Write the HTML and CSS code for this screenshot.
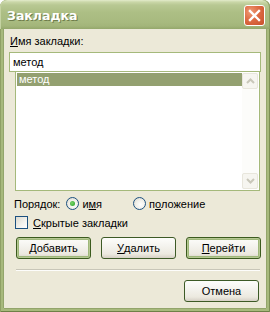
FILE: index.html
```html
<!DOCTYPE html>
<html>
<head>
<meta charset="utf-8">
<link rel="stylesheet" href="styles.css">
</head>
<body>
<div class="window">
  <div class="titlebar">
    <span class="title">Закладка</span>
    <div class="close">
      <svg width="13" height="13" viewBox="0 0 13 13"><path d="M2 2 L11 11 M11 2 L2 11" stroke="#fff" stroke-width="2.4" stroke-linecap="square"/></svg>
    </div>
  </div>
  <div class="client">
    <div class="lbl"><u>И</u>мя закладки:</div>
    <div class="input">метод</div>
    <div class="list">
      <div class="items"><div class="item sel">метод</div></div>
      <div class="scroll">
        <div class="sbtn"><svg width="9" height="6" viewBox="0 0 9 6"><path d="M1 5 L4.5 1.5 L8 5" fill="none" stroke="#c9c7ba" stroke-width="2"/></svg></div>
        <div class="strack"></div>
        <div class="sbtn"><svg width="9" height="6" viewBox="0 0 9 6"><path d="M1 1 L4.5 4.5 L8 1" fill="none" stroke="#c9c7ba" stroke-width="2"/></svg></div>
      </div>
    </div>
    <div class="order">
      <span class="olbl">Порядок:</span>
      <span class="radio on"></span><span class="rtxt">и<u>м</u>я</span>
      <span class="radio r2"></span><span class="rtxt">п<u>о</u>ложение</span>
    </div>
    <div class="check"><span class="box"></span><span><u>С</u>крытые закладки</span></div>
    <div class="buttons">
      <div class="btn def"><u>Д</u>обавить</div>
      <div class="btn"><u>У</u>далить</div>
      <div class="btn def"><u>П</u>ерейти</div>
    </div>
    <div class="sep"></div>
    <div class="footer"><div class="btn">Отмена</div></div>
  </div>
</div>
</body>
</html>
```
FILE: styles.css
```css
html, body { margin: 0; padding: 0; }
body { width: 270px; height: 312px; overflow: hidden; background: #fff; font-family: "Liberation Sans", Arial, sans-serif; font-size: 11px; color: #000; }
u { text-decoration: underline; text-underline-offset: 1px; }
.window { width: 270px; height: 312px; display: flex; flex-direction: column; background: #a7b97c; border-radius: 7px 7px 0 0; box-sizing: border-box;
  box-shadow: inset 1px 0 #8fa065, inset -1px 0 #7c8e55, inset 0 -1px #6e8047; }
.titlebar { height: 29px; flex: none; display: flex; align-items: center; justify-content: space-between; padding: 0 5px 0 7px; border-radius: 7px 7px 0 0;
  background: linear-gradient(#e3ebcb 0, #cad7a8 2px, #b8c893 5px, #adbf85 12px, #a8ba7f 22px, #a3b57a 26px, #94a76b 29px);
  box-shadow: inset 1px 0 #c5d3a2, inset -1px 0 #8d9f62; }
.title { color: #fff; font-family: "DejaVu Sans", sans-serif; font-weight: bold; font-size: 12.5px; text-shadow: 1px 1px 0 #6e7d4c; padding-top: 1px; }
.close { width: 19px; height: 19px; border: 1px solid #fff; border-radius: 3px; display: flex; align-items: center; justify-content: center;
  background: radial-gradient(circle at 30% 30%, #ef9a76 0, #dd6b43 45%, #c8502b 100%); margin-top: 1px; }
.client { flex: 1; background: #ece9d8; margin: 0 4px 4px 4px; display: flex; flex-direction: column; box-shadow: -1px 0 #93a56b, 1px 0 #93a56b, 0 1px #93a56b; }
.lbl { padding: 6px 0 0 6px; line-height: 13px; }
.input { margin: 4px 0 0 5px; width: 252px; height: 20px; box-sizing: border-box; border: 1px solid #a5b97b; background: #fff; padding: 3px 0 0 3px; line-height: 13px; }
.list { margin: 0 0 0 11px; width: 245px; height: 119px; box-sizing: border-box; border: 1px solid #a5b97b; border-top: 0; background: #fff; display: flex; padding: 1px; }
.items { flex: 1; }
.item { height: 13px; line-height: 13px; padding-left: 2px; }
.sel { background: #93a070; color: #fff; }
.scroll { width: 16px; display: flex; flex-direction: column; background: #fcfcfa; }
.sbtn { height: 16px; box-sizing: border-box; border: 1px solid #e8e6dc; border-radius: 2px; background: #f6f5f0; display: flex; align-items: center; justify-content: center; }
.strack { flex: 1; }
.order { display: flex; align-items: center; height: 13px; margin: 6px 0 0 10px; }
.olbl { margin-right: 6px; }
.radio { width: 13px; height: 13px; box-sizing: border-box; border: 1px solid #1c5180; border-radius: 50%; background: radial-gradient(circle at 60% 60%, #fff 0, #f0efe8 50%, #d4d1c6 100%); display: inline-flex; align-items: center; justify-content: center; margin-right: 3px; }
.radio.on::after { content: ""; width: 5px; height: 5px; border-radius: 50%; background: radial-gradient(circle at 40% 40%, #7bd36b, #21a121); }
.r2 { margin-left: 31px; }
.check { display: flex; align-items: center; margin: 6px 0 0 11px; height: 13px; }
.box { width: 13px; height: 13px; box-sizing: border-box; border: 1px solid #1c5180; background: linear-gradient(135deg, #dcdad0 0, #f4f3ee 60%, #fff 100%); margin-right: 5px; }
.buttons { display: flex; gap: 10px; margin: 8px 0 0 12px; }
.btn { width: 75px; height: 22px; box-sizing: border-box; border: 1px solid #3d5a26; border-radius: 3px; display: flex; align-items: center; justify-content: center;
  background: linear-gradient(#fdfdfb 0, #f4f3ee 40%, #ece9df 80%, #d6d0c5 100%); }
.btn.def { box-shadow: inset 0 0 0 1px #b6c892, inset 0 0 0 2px #9eb77a; border-color: #3b5b1e; }
.sep { margin: 10px 6px 0 12px; height: 1px; background: #c8c6b8; border-bottom: 1px solid #fdfdfb; }
.footer { display: flex; justify-content: flex-end; margin: 9px 7px 0 0; }
```
